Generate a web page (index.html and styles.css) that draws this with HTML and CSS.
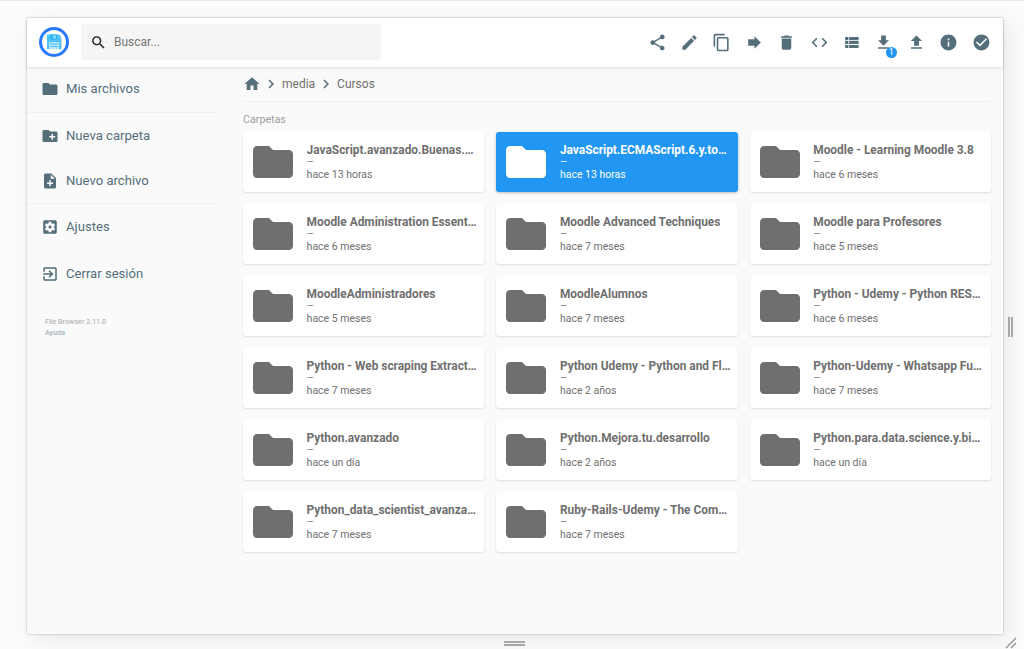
FILE: index.html
```html
<!DOCTYPE html>
<html lang="es">
<head>
  <meta charset="UTF-8" />
  <title>File Browser</title>
  <link rel="stylesheet" href="styles.css">
</head>
<body>

  <!-- Icon set -->
  <svg class="sprite" xmlns="http://www.w3.org/2000/svg">
    <symbol id="i-share" viewBox="0 0 24 24"><path d="M18 16.08c-.76 0-1.44.3-1.96.77L8.91 12.7c.05-.23.09-.46.09-.7s-.04-.47-.09-.7l7.05-4.11c.54.5 1.25.81 2.04.81 1.66 0 3-1.34 3-3s-1.34-3-3-3-3 1.34-3 3c0 .24.04.47.09.7L8.04 9.81C7.5 9.31 6.79 9 6 9c-1.66 0-3 1.34-3 3s1.34 3 3 3c.79 0 1.5-.31 2.04-.81l7.12 4.16c-.05.21-.08.43-.08.65 0 1.61 1.31 2.92 2.92 2.92 1.61 0 2.92-1.31 2.92-2.92s-1.31-2.92-2.92-2.92z"/></symbol>
    <symbol id="i-edit" viewBox="0 0 24 24"><path d="M3 17.25V21h3.75L17.81 9.94l-3.75-3.75L3 17.25zM20.71 7.04c.39-.39.39-1.02 0-1.41l-2.34-2.34c-.39-.39-1.02-.39-1.41 0l-1.83 1.83 3.75 3.75 1.83-1.83z"/></symbol>
    <symbol id="i-copy" viewBox="0 0 24 24"><path d="M16 1H4c-1.1 0-2 .9-2 2v14h2V3h12V1zm3 4H8c-1.1 0-2 .9-2 2v14c0 1.1.9 2 2 2h11c1.1 0 2-.9 2-2V7c0-1.1-.9-2-2-2zm0 16H8V7h11v14z"/></symbol>
    <symbol id="i-forward" viewBox="0 0 24 24"><path d="M12 8V4l8 8-8 8v-4H4V8z"/></symbol>
    <symbol id="i-delete" viewBox="0 0 24 24"><path d="M6 19c0 1.1.9 2 2 2h8c1.1 0 2-.9 2-2V7H6v12zM19 4h-3.5l-1-1h-5l-1 1H5v2h14V4z"/></symbol>
    <symbol id="i-code" viewBox="0 0 24 24"><path d="M9.4 16.6L4.8 12l4.6-4.6L8 6l-6 6 6 6 1.4-1.4zm5.2 0l4.6-4.6-4.6-4.6L16 6l6 6-6 6-1.4-1.4z"/></symbol>
    <symbol id="i-list" viewBox="0 0 24 24"><path d="M4 14h4v-4H4v4zm0 5h4v-4H4v4zM4 9h4V5H4v4zm5 5h12v-4H9v4zm0 5h12v-4H9v4zM9 5v4h12V5H9z"/></symbol>
    <symbol id="i-download" viewBox="0 0 24 24"><path d="M19 9h-4V3H9v6H5l7 7 7-7zM5 18v2h14v-2H5z"/></symbol>
    <symbol id="i-upload" viewBox="0 0 24 24"><path d="M9 16h6v-6h4l-7-7-7 7h4zm-4 2h14v2H5z"/></symbol>
    <symbol id="i-info" viewBox="0 0 24 24"><path d="M12 2C6.48 2 2 6.48 2 12s4.48 10 10 10 10-4.48 10-10S17.52 2 12 2zm1 15h-2v-6h2v6zm0-8h-2V7h2v2z"/></symbol>
    <symbol id="i-check" viewBox="0 0 24 24"><path d="M12 2C6.48 2 2 6.48 2 12s4.48 10 10 10 10-4.48 10-10S17.52 2 12 2zm-2 15l-5-5 1.41-1.41L10 14.17l7.59-7.59L19 8l-9 9z"/></symbol>
    <symbol id="i-search" viewBox="0 0 24 24"><path d="M15.5 14h-.79l-.28-.27C15.41 12.59 16 11.11 16 9.5 16 5.91 13.09 3 9.5 3S3 5.91 3 9.5 5.91 16 9.5 16c1.61 0 3.09-.59 4.23-1.57l.27.28v.79l5 4.99L20.49 19l-4.99-5zm-6 0C7.01 14 5 11.99 5 9.5S7.01 5 9.5 5 14 7.01 14 9.5 11.99 14 9.5 14z"/></symbol>
    <symbol id="i-folder" viewBox="0 0 24 24"><path d="M10 4H4c-1.1 0-1.99.9-1.99 2L2 18c0 1.1.9 2 2 2h16c1.1 0 2-.9 2-2V8c0-1.1-.9-2-2-2h-8l-2-2z"/></symbol>
    <symbol id="i-newfolder" viewBox="0 0 24 24"><path d="M20 6h-8l-2-2H4c-1.11 0-1.99.89-1.99 2L2 18c0 1.11.89 2 2 2h16c1.11 0 2-.89 2-2V8c0-1.11-.89-2-2-2zm-1 8h-3v3h-2v-3h-3v-2h3V9h2v3h3v2z"/></symbol>
    <symbol id="i-newfile" viewBox="0 0 24 24"><path d="M14 2H6c-1.1 0-1.99.9-1.99 2L4 20c0 1.1.89 2 1.99 2H18c1.1 0 2-.9 2-2V8l-6-6zm2 14h-3v3h-2v-3H8v-2h3v-3h2v3h3v2zm-3-7V3.5L18.5 9H13z"/></symbol>
    <symbol id="i-settings" viewBox="0 0 24 24"><path d="M12 10c-1.1 0-2 .9-2 2s.9 2 2 2 2-.9 2-2-.9-2-2-2zm7-7H5c-1.11 0-2 .9-2 2v14c0 1.1.89 2 2 2h14c1.11 0 2-.9 2-2V5c0-1.1-.89-2-2-2zm-1.75 9c0 .23-.02.46-.05.68l1.48 1.16c.13.11.17.3.08.45l-1.4 2.42c-.09.15-.27.21-.43.15l-1.74-.7c-.36.28-.76.51-1.18.69l-.26 1.85c-.03.17-.18.3-.35.3h-2.8c-.17 0-.32-.13-.35-.29l-.26-1.85c-.43-.18-.82-.41-1.18-.69l-1.74.7c-.16.06-.34 0-.43-.15l-1.4-2.42c-.09-.15-.05-.34.08-.45l1.48-1.16c-.03-.23-.05-.46-.05-.69 0-.23.02-.46.05-.68l-1.48-1.16c-.13-.11-.17-.3-.08-.45l1.4-2.42c.09-.15.27-.21.43-.15l1.74.7c.36-.28.76-.51 1.18-.69l.26-1.85c.03-.17.18-.3.35-.3h2.8c.17 0 .32.13.35.29l.26 1.85c.43.18.82.41 1.18.69l1.74-.7c.16-.06.34 0 .43.15l1.4 2.42c.09.15.05.34-.08.45l-1.48 1.16c.03.23.05.46.05.69z"/></symbol>
    <symbol id="i-exit" viewBox="0 0 24 24"><path d="M10.09 15.59L11.5 17l5-5-5-5-1.41 1.41L12.67 11H3v2h9.67l-2.58 2.59zM19 3H5c-1.11 0-2 .9-2 2v4h2V5h14v14H5v-4H3v4c0 1.1.89 2 2 2h14c1.1 0 2-.9 2-2V5c0-1.1-.9-2-2-2z"/></symbol>
    <symbol id="i-home" viewBox="0 0 24 24"><path d="M10 20v-6h4v6h5v-8h3L12 3 2 12h3v8z"/></symbol>
    <symbol id="i-chevron" viewBox="0 0 24 24"><path d="M10 6L8.59 7.41 13.17 12l-4.58 4.59L10 18l6-6z"/></symbol>
  </svg>

  <div class="window">

    <!-- Top bar -->
    <header class="topbar">
      <svg class="logo" viewBox="0 0 30 30">
        <circle cx="15" cy="15" r="13.5" fill="#fff" stroke="#2979ff" stroke-width="3"/>
        <path d="M20 9l3 3v10.500h-6z" fill="#cfd8dc"/>
        <path d="M8 7.500h12l2 2v12.500h-14z" fill="#4fc3f7"/>
        <rect x="11" y="7.500" width="7" height="5" fill="#29b6f6"/>
        <rect x="14.500" y="8.500" width="2" height="3" fill="#b3e5fc"/>
        <rect x="10" y="15" width="10" height="7" fill="#b3e5fc"/>
        <path d="M11 17h8M11 19.500h8" stroke="#4fc3f7" stroke-width="1"/>
      </svg>
      <div class="search">
        <svg class="search-icon"><use href="#i-search"/></svg>
        <span>Buscar...</span>
      </div>
      <div class="actions">
        <svg class="action"><use href="#i-share"/></svg>
        <svg class="action"><use href="#i-edit"/></svg>
        <svg class="action"><use href="#i-copy"/></svg>
        <svg class="action"><use href="#i-forward"/></svg>
        <svg class="action"><use href="#i-delete"/></svg>
        <svg class="action"><use href="#i-code"/></svg>
        <svg class="action"><use href="#i-list"/></svg>
        <div class="action-wrap">
          <svg class="action"><use href="#i-download"/></svg>
          <span class="badge">1</span>
        </div>
        <svg class="action"><use href="#i-upload"/></svg>
        <svg class="action"><use href="#i-info"/></svg>
        <svg class="action"><use href="#i-check"/></svg>
      </div>
    </header>

    <div class="content">

      <!-- Sidebar -->
      <nav class="sidebar">
        <div class="nav-group nav-group-first">
          <a class="nav-item"><svg><use href="#i-folder"/></svg>Mis archivos</a>
        </div>
        <div class="nav-group">
          <a class="nav-item"><svg><use href="#i-newfolder"/></svg>Nueva carpeta</a>
          <a class="nav-item"><svg><use href="#i-newfile"/></svg>Nuevo archivo</a>
        </div>
        <div class="nav-group nav-group-last">
          <a class="nav-item"><svg><use href="#i-settings"/></svg>Ajustes</a>
          <a class="nav-item"><svg><use href="#i-exit"/></svg>Cerrar sesión</a>
        </div>
        <p class="credits">File Browser 2.11.0<br><span class="help">Ayuda</span></p>
      </nav>

      <!-- Listing -->
      <main class="listing">
        <div class="crumbs">
          <svg class="crumb-home"><use href="#i-home"/></svg>
          <svg class="crumb-sep"><use href="#i-chevron"/></svg>
          <span>media</span>
          <svg class="crumb-sep"><use href="#i-chevron"/></svg>
          <span>Cursos</span>
        </div>
        <h2 class="section-title">Carpetas</h2>
        <div class="grid">
          <div class="card"><svg class="folder"><use href="#i-folder"/></svg><div class="info"><p class="name">JavaScript.avanzado.Buenas.practicas</p><p class="size">—</p><p class="date">hace 13 horas</p></div></div>
          <div class="card selected"><svg class="folder"><use href="#i-folder"/></svg><div class="info"><p class="name">JavaScript.ECMAScript.6.y.todo.lo.nuevo</p><p class="size">—</p><p class="date">hace 13 horas</p></div></div>
          <div class="card"><svg class="folder"><use href="#i-folder"/></svg><div class="info"><p class="name">Moodle - Learning Moodle 3.8</p><p class="size">—</p><p class="date">hace 6 meses</p></div></div>
          <div class="card"><svg class="folder"><use href="#i-folder"/></svg><div class="info"><p class="name">Moodle Administration Essentials</p><p class="size">—</p><p class="date">hace 6 meses</p></div></div>
          <div class="card"><svg class="folder"><use href="#i-folder"/></svg><div class="info"><p class="name">Moodle Advanced Techniques</p><p class="size">—</p><p class="date">hace 7 meses</p></div></div>
          <div class="card"><svg class="folder"><use href="#i-folder"/></svg><div class="info"><p class="name">Moodle para Profesores</p><p class="size">—</p><p class="date">hace 5 meses</p></div></div>
          <div class="card"><svg class="folder"><use href="#i-folder"/></svg><div class="info"><p class="name">MoodleAdministradores</p><p class="size">—</p><p class="date">hace 5 meses</p></div></div>
          <div class="card"><svg class="folder"><use href="#i-folder"/></svg><div class="info"><p class="name">MoodleAlumnos</p><p class="size">—</p><p class="date">hace 7 meses</p></div></div>
          <div class="card"><svg class="folder"><use href="#i-folder"/></svg><div class="info"><p class="name">Python - Udemy - Python RESTful APIs</p><p class="size">—</p><p class="date">hace 6 meses</p></div></div>
          <div class="card"><svg class="folder"><use href="#i-folder"/></svg><div class="info"><p class="name">Python - Web scraping Extraction</p><p class="size">—</p><p class="date">hace 7 meses</p></div></div>
          <div class="card"><svg class="folder"><use href="#i-folder"/></svg><div class="info"><p class="name">Python Udemy - Python and Flask</p><p class="size">—</p><p class="date">hace 2 años</p></div></div>
          <div class="card"><svg class="folder"><use href="#i-folder"/></svg><div class="info"><p class="name">Python-Udemy - Whatsapp Fullstack</p><p class="size">—</p><p class="date">hace 7 meses</p></div></div>
          <div class="card"><svg class="folder"><use href="#i-folder"/></svg><div class="info"><p class="name">Python.avanzado</p><p class="size">—</p><p class="date">hace un día</p></div></div>
          <div class="card"><svg class="folder"><use href="#i-folder"/></svg><div class="info"><p class="name">Python.Mejora.tu.desarrollo</p><p class="size">—</p><p class="date">hace 2 años</p></div></div>
          <div class="card"><svg class="folder"><use href="#i-folder"/></svg><div class="info"><p class="name">Python.para.data.science.y.big.data</p><p class="size">—</p><p class="date">hace un día</p></div></div>
          <div class="card"><svg class="folder"><use href="#i-folder"/></svg><div class="info"><p class="name">Python_data_scientist_avanzado_total</p><p class="size">—</p><p class="date">hace 7 meses</p></div></div>
          <div class="card"><svg class="folder"><use href="#i-folder"/></svg><div class="info"><p class="name">Ruby-Rails-Udemy - The Complete Guide</p><p class="size">—</p><p class="date">hace 7 meses</p></div></div>
        </div>
      </main>
    </div>
  </div>

  <!-- Dialog resize handles -->
  <div class="handle handle-right"></div>
  <div class="handle handle-bottom"></div>
  <svg class="handle-corner" viewBox="0 0 12 12"><path d="M1 11L11 1M6 11l5-5" stroke="#8a8a8a" stroke-width="1.200" fill="none"/></svg>

</body>
</html>
```

FILE: styles.css
```css
:root {
  --icon-color: #546e7a;
  --text-gray: #6f6f6f;
  --accent: #2196f3;
}

* {
  box-sizing: border-box;
}

html, body {
  height: 100%;
}

body {
  margin: 0;
  padding: 18px 21px 15px 27px;
  background: #fbfbfb;
  border-top: 1px solid #e8e8e8;
  font-family: Roboto, 'Liberation Sans', sans-serif;
  overflow: hidden;
  position: relative;
}

p, h2 {
  margin: 0;
}

.sprite {
  display: none;
}

.window {
  height: 616px;
  margin-top: -1px;
  display: flex;
  flex-direction: column;
  background: #fafafa;
  box-shadow: 0 0 2px rgba(0, 0, 0, 0.3), 6px 6px 20px rgba(0, 0, 0, 0.07);
}

/* Top bar */
.topbar {
  height: 49px;
  flex-shrink: 0;
  display: flex;
  align-items: center;
  padding: 0 12.500px 1px 12px;
  background: #fff;
  box-shadow: 0 1px 3px rgba(0, 0, 0, 0.12);
  position: relative;
}

.logo {
  width: 30px;
  height: 30px;
}

.search {
  width: 300px;
  height: 36px;
  margin-left: 12px;
  padding-left: 9px;
  display: flex;
  align-items: center;
  gap: 7px;
  background: #f5f5f5;
  border-radius: 3px;
  color: #757575;
  font-size: 12px;
}

.search-icon {
  width: 17px;
  height: 17px;
  fill: #212121;
}

.actions {
  margin-left: auto;
  display: flex;
  gap: 13.400px;
}

.action {
  width: 19px;
  height: 19px;
  fill: var(--icon-color);
  display: block;
}

.action-wrap {
  position: relative;
}

.badge {
  position: absolute;
  right: -3.500px;
  bottom: -6px;
  width: 11px;
  height: 11px;
  border-radius: 50%;
  background: var(--accent);
  color: #fff;
  font-size: 9px;
  line-height: 11px;
  text-align: center;
}

/* Sidebar */
.content {
  flex: 1;
  display: flex;
  min-height: 0;
}

.sidebar {
  width: 192px;
  flex-shrink: 0;
  margin-right: 24px;
}

.nav-group {
  border-bottom: 1px solid #f0f0f0;
}

.nav-group-first {
  height: 46px;
}

.nav-group-last {
  border-bottom: none;
  margin-top: -1px;
}

.nav-item {
  height: 45px;
  display: flex;
  align-items: center;
  gap: 7.500px;
  padding-left: 13.500px;
  color: var(--icon-color);
  font-size: 13.100px;
}

.nav-group-first .nav-item {
  height: 43px;
}

.nav-group-last .nav-item {
  height: 47px;
}

.nav-item svg {
  width: 18px;
  height: 18px;
  fill: var(--icon-color);
}

.credits {
  margin: 19px 0 0 18px;
  font-size: 7.200px;
  line-height: 11px;
  color: #a8a8a8;
}

.help {
  color: #90a4ae;
}

/* Listing */
.listing {
  flex: 1;
  padding-right: 12px;
}

.crumbs {
  height: 35px;
  display: flex;
  align-items: center;
  gap: 2px;
  border-bottom: 1px solid #f0f0f0;
  color: var(--text-gray);
  font-size: 12px;
}

.crumb-home {
  width: 18px;
  height: 18px;
  fill: var(--icon-color);
  margin-right: -1px;
}

.crumb-sep {
  width: 18px;
  height: 18px;
  fill: var(--icon-color);
}

.section-title {
  margin: 11px 0 6px;
  font-size: 10.700px;
  line-height: 13px;
  font-weight: 400;
  color: #9e9e9e;
}

.grid {
  display: grid;
  grid-template-columns: repeat(3, 1fr);
  gap: 12px;
}

.card {
  height: 60px;
  display: flex;
  align-items: center;
  padding-left: 6px;
  background: #fff;
  border-radius: 3px;
  box-shadow: 0 1px 2px rgba(0, 0, 0, 0.12);
  min-width: 0;
}

.folder {
  width: 48px;
  height: 48px;
  flex-shrink: 0;
  fill: #6f6f6f;
}

.info {
  margin-left: 9.600px;
  min-width: 0;
  flex: 1;
  padding-right: 6.500px;
  color: var(--text-gray);
}

.name {
  font-size: 11.900px;
  line-height: 16px;
  font-weight: 700;
  white-space: nowrap;
  overflow: hidden;
  text-overflow: ellipsis;
}

.size {
  font-size: 9px;
  line-height: 9px;
}

.date {
  font-size: 10.500px;
  line-height: 16px;
}

.card.selected {
  background: var(--accent);
  box-shadow: 0 1px 3px rgba(0, 0, 0, 0.25);
}

.card.selected .folder {
  fill: #fff;
}

.card.selected .info {
  color: #fff;
}

/* Dialog resize handles */
.handle {
  position: absolute;
}

.handle-right {
  left: 1008px;
  top: 316px;
  width: 5px;
  height: 20px;
  border-left: 2px solid #a8a8a8;
  border-right: 2px solid #a8a8a8;
}

.handle-bottom {
  left: 504px;
  top: 640px;
  width: 21px;
  height: 5px;
  border-top: 2px solid #a8a8a8;
  border-bottom: 2px solid #a8a8a8;
}

.handle-corner {
  position: absolute;
  left: 1005px;
  top: 636px;
  width: 12px;
  height: 12px;
}
```
